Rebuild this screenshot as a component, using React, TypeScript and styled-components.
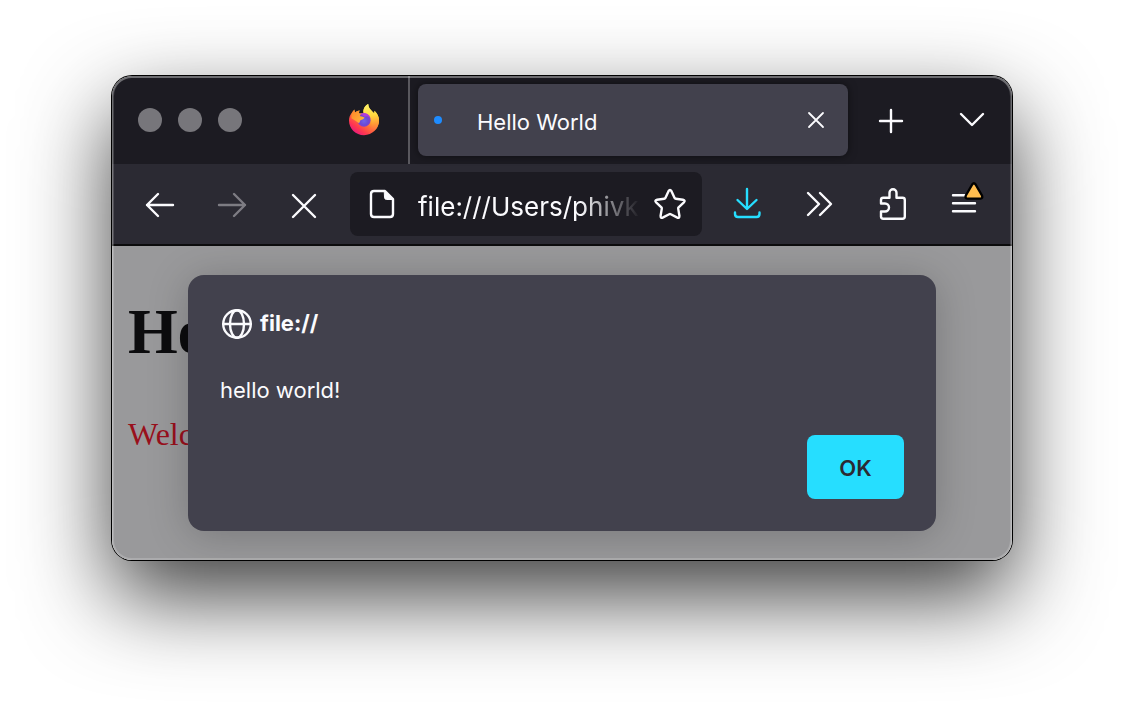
import React, { useState } from "react";
import styled, { createGlobalStyle } from "styled-components";

const ui = `Inter, "Liberation Sans", sans-serif`;

const GlobalStyle = createGlobalStyle`
  *, *::before, *::after { box-sizing: border-box; }
  body { margin: 0; background: #fff; }
`;

const Desktop = styled.div`
  min-height: 100vh;
  padding: 76px 112px;
  overflow: hidden;
  font-family: ${ui};
`;

const BrowserWindow = styled.main`
  position: relative;
  border-radius: 20px;
  box-shadow: 0 0 0 1px #000, 0 36px 88px rgba(0, 0, 0, 0.76);

  &::after {
    content: "";
    position: absolute;
    inset: 0;
    border-radius: inherit;
    box-shadow: inset 0 0 0 2px rgba(255, 255, 255, 0.18), inset 0 1px 0 1px rgba(255, 255, 255, 0.22);
    pointer-events: none;
  }
`;

const TabStrip = styled.header`
  display: flex;
  align-items: center;
  height: 88px;
  padding: 0 8px 0 26px;
  border-radius: 20px 20px 0 0;
  background: #1c1b22;
`;

const WindowControls = styled.div`
  display: flex;
  gap: 16px;
`;

const WindowDot = styled.button`
  width: 24px;
  height: 24px;
  padding: 0;
  border: 0;
  border-radius: 50%;
  background: #77767b;
`;

const IconButton = styled.button<{ $size?: number; $color?: string }>`
  display: flex;
  flex: none;
  align-items: center;
  justify-content: center;
  width: ${(p) => p.$size ?? 64}px;
  height: ${(p) => p.$size ?? 64}px;
  padding: 0;
  border: 0;
  border-radius: 8px;
  background: none;
  color: ${(p) => p.$color ?? "#fbfbfe"};

  &:disabled { color: #7d7c83; }
`;

const PinnedTab = styled.div`
  display: flex;
  align-self: stretch;
  align-items: center;
  width: 78px;
  margin-left: 90px;
  padding: 0 16px;
  border-right: 2px solid #5a595f;
`;

const Tab = styled.div`
  display: flex;
  flex: 1;
  align-items: center;
  min-width: 0;
  height: 72px;
  margin: 0 11px 0 8px;
  padding: 0 16px;
  border-radius: 8px;
  background: #42414d;
  box-shadow: 0 0 8px rgba(0, 0, 0, 0.5);
`;

const LoadingDot = styled.span`
  flex: none;
  width: 8px;
  height: 8px;
  margin-right: 35px;
  border-radius: 50%;
  background: #1e8cff;
`;

const TabTitle = styled.span`
  flex: 1;
  padding-top: 4px;
  overflow: hidden;
  color: #fbfbfe;
  font-size: 22px;
  line-height: 28px;
  white-space: nowrap;
`;

const TabListSlot = styled.div`
  margin-left: 17px;
`;

const NavBar = styled.nav`
  display: flex;
  align-items: center;
  gap: 8px;
  height: 82px;
  padding: 0 16px;
  border-bottom: 2px solid #0c0c0d;
  background: #2b2a33;
`;

const AddressBar = styled.label`
  display: flex;
  flex: 1;
  align-items: center;
  min-width: 0;
  height: 64px;
  margin: 0 6px;
  padding: 0 16px;
  border-radius: 8px;
  background: #1c1b22;
  color: #fbfbfe;
`;

const AddressInput = styled.input`
  flex: 1;
  min-width: 0;
  height: 40px;
  margin: 0 14px 0 20px;
  padding: 4px 0 0;
  border: 0;
  outline: 0;
  background: none;
  color: #fbfbfe;
  font-family: ${ui};
  font-size: 26px;
  line-height: 36px;
  mask-image: linear-gradient(to left, transparent 0, #000 60px);
`;

const Viewport = styled.section`
  display: grid;
  overflow: hidden;
  border-radius: 0 0 20px 20px;
  background: #99999b;
`;

const Page = styled.article`
  grid-area: 1 / 1;
  padding: 50px 16px 0;
  font-family: "Liberation Serif", serif;
`;

const PageHeading = styled.h1`
  margin: 0 0 48px;
  color: #0c0c0e;
  font-size: 64px;
  line-height: 72px;
`;

const PageText = styled.p`
  margin: 0;
  color: #99101c;
  font-size: 32px;
  line-height: 36px;
`;

const Dialog = styled.div`
  position: relative;
  grid-area: 1 / 1;
  display: flex;
  flex-direction: column;
  margin: 29px 76px;
  padding: 32px;
  border-radius: 16px;
  background: #42414d;
  box-shadow: 0 4px 40px rgba(0, 0, 0, 0.22);
  color: #fbfbfe;
  font-size: 22px;
  line-height: 28px;
`;

const DialogHeader = styled.h2`
  display: flex;
  align-items: center;
  gap: 8px;
  height: 32px;
  margin: 0 0 37px;
  font-size: 22px;
  font-weight: 700;
`;

const DialogMessage = styled.p`
  margin: 0 0 31px;
`;

const OkButton = styled.button`
  align-self: flex-end;
  min-width: 97px;
  height: 64px;
  padding: 2px 32px 0;
  border: 0;
  border-radius: 8px;
  background: #26deff;
  color: #2b2a33;
  font-family: ${ui};
  font-size: 22px;
  font-weight: 600;
`;

const Glyph = styled.svg`
  flex: none;
  display: block;
  width: 32px;
  height: 32px;
  overflow: visible;
  fill: none;
  stroke: currentColor;
  stroke-width: 2.4;
  stroke-linecap: round;
  stroke-linejoin: round;
`;

function Icon({ children }: { children: React.ReactNode }) {
  return (
    <Glyph viewBox="0 0 32 32" aria-hidden="true">
      {children}
    </Glyph>
  );
}

function FirefoxLogo() {
  return (
    <svg width="32" height="34" viewBox="0 0 32 34" role="img" aria-label="Firefox">
      <defs>
        <linearGradient id="flame" x1="26" y1="5" x2="6" y2="31" gradientUnits="userSpaceOnUse">
          <stop offset="0.05" stopColor="#fff44f" />
          <stop offset="0.35" stopColor="#ffb02e" />
          <stop offset="0.55" stopColor="#ff7139" />
          <stop offset="0.78" stopColor="#ff3750" />
          <stop offset="1" stopColor="#e31587" />
        </linearGradient>
        <linearGradient id="tail" x1="20" y1="1" x2="24" y2="30" gradientUnits="userSpaceOnUse">
          <stop offset="0" stopColor="#fff36b" />
          <stop offset="0.4" stopColor="#ffd83f" />
          <stop offset="0.7" stopColor="#ff9a35" />
          <stop offset="1" stopColor="#ff4055" stopOpacity="0" />
        </linearGradient>
        <radialGradient id="globe" cx="16" cy="18" r="8" gradientUnits="userSpaceOnUse">
          <stop offset="0" stopColor="#6f63ea" />
          <stop offset="0.5" stopColor="#6a4bd6" />
          <stop offset="1" stopColor="#9a35c0" />
        </radialGradient>
        <linearGradient id="head" x1="4" y1="9" x2="15" y2="18" gradientUnits="userSpaceOnUse">
          <stop offset="0" stopColor="#ff8a2a" />
          <stop offset="1" stopColor="#ffb43a" />
        </linearGradient>
      </defs>
      <path
        fill="url(#flame)"
        d="M3.6 10.2C4.2 8.7 5.2 7.2 6.6 6.4 6.6 7.6 6.9 8.7 7.4 9.5 8.9 8.1 10.3 7.6 11.7 7.5 11 8.5 10.9 9.5 11.2 10.3H15.500C14.8 6.8 16.5 3.1 20.2 1.1 20.3 4.6 22.1 6.4 24.3 8.5L26.3 10.6 26.5 7.8C29.4 10.6 31 13.9 31 17.6 31 25.7 24.3 32.2 16 32.2S1 25.8 1 17.5C1 14.7 1.9 12 3.6 10.2Z"
      />
      <path
        fill="url(#tail)"
        d="M20.2 1.1C20.3 4.6 22.1 6.4 24.3 8.5L26.3 10.6 26.5 7.8C29.4 10.6 31 13.9 31 17.6 31 24 27 29.5 21 31.3 24.8 26.5 25.4 20.5 23 15.5 21.3 12.2 16.6 11.2 15.5 9.6 15 6.1 17 2.8 20.2 1.1Z"
      />
      <circle cx="16" cy="17.2" r="6.600" fill="url(#globe)" />
      <path fill="#b23bdc" d="M12.5 10.8C16 8.8 21.3 10.3 22.3 15 20.5 12.8 18 12.8 16.5 13.8Z" />
      <path
        fill="url(#head)"
        d="M3.6 10.2C5 9.3 6.3 9.2 7.4 9.5 8.9 8.1 10.3 7.6 11.7 7.5 11 8.5 10.9 9.5 11.2 10.3L12.2 13.2C14.1 13.5 15.8 14 16.4 14.4 16.5 16 13.7 16.3 12.7 17.1 11.8 17.9 12 19.1 11 20.2 8.8 18.8 6.2 16.5 3.4 15.2Z"
      />
    </svg>
  );
}

export default function App() {
  const [address, setAddress] = useState("file:///Users/phivk/");
  return (
    <>
      <GlobalStyle />
      <Desktop>
        <BrowserWindow>
          <TabStrip>
            <WindowControls>
              <WindowDot aria-label="Close window" />
              <WindowDot aria-label="Minimize window" />
              <WindowDot aria-label="Zoom window" />
            </WindowControls>
            <PinnedTab>
              <FirefoxLogo />
            </PinnedTab>
            <Tab>
              <LoadingDot />
              <TabTitle>Hello World</TabTitle>
              <IconButton $size={32} aria-label="Close tab">
                <Icon>
                  <path strokeWidth="1.8" d="M9 9L23 23M23 9L9 23" />
                </Icon>
              </IconButton>
            </Tab>
            <IconButton aria-label="New tab">
              <Icon>
                <path d="M16 6V28M5 17H27" />
              </Icon>
            </IconButton>
            <TabListSlot>
              <IconButton aria-label="List all tabs">
                <Icon>
                  <path d="M5 10L16 21L27 10" />
                </Icon>
              </IconButton>
            </TabListSlot>
          </TabStrip>

          <NavBar>
            <IconButton aria-label="Back">
              <Icon>
                <path d="M3 17H29M14 6L3 17L14 28" />
              </Icon>
            </IconButton>
            <IconButton aria-label="Forward" disabled>
              <Icon>
                <path d="M3 17H29M18 6L29 17L18 28" />
              </Icon>
            </IconButton>
            <IconButton aria-label="Stop">
              <Icon>
                <path d="M5 7L27 29M27 7L5 29" />
              </Icon>
            </IconButton>
            <AddressBar>
              <Icon>
                <path d="M8 3H19L27 11V26Q27 29 24 29H8Q5 29 5 26V6Q5 3 8 3Z" />
                <path fill="currentColor" strokeWidth="1" d="M18.5 2.5L27.5 11.5H20.500Q18.5 11.5 18.5 9.5Z" />
              </Icon>
              <AddressInput
                aria-label="Address"
                spellCheck={false}
                value={address}
                onChange={(e) => setAddress(e.target.value)}
              />
              <IconButton $size={32} aria-label="Bookmark this page">
                <Icon>
                  <path d="M14.5 3.2Q16 .8 17.5 3.2L20.6 9.9Q21 10.6 21.8 10.7L28.9 11.7Q31.7 12.3 29.9 14.3L24.6 19.3Q24.1 19.9 24.2 20.6L25.4 27.8Q25.6 30.7 22.9 29.4L16.8 26.2Q16 25.8 15.2 26.2L9.1 29.4Q6.4 30.7 6.6 27.8L7.8 20.6Q7.9 19.9 7.4 19.3L2.1 14.3Q.3 12.3 3.1 11.7L10.2 10.7Q11 10.6 11.4 9.9Z" />
                </Icon>
              </IconButton>
            </AddressBar>
            <IconButton $color="#26deff" aria-label="Downloads">
              <Icon>
                <path d="M15 1V20.500M5.5 12L15 21L24.5 12M3 24.5V26Q3 29 6 29H24.500Q27.5 29 27.5 26V24.500" />
              </Icon>
            </IconButton>
            <IconButton aria-label="More tools">
              <Icon>
                <path d="M4 5L15 16L4 27M16 5L27 16L16 27" />
              </Icon>
            </IconButton>
            <IconButton aria-label="Extensions">
              <Icon>
                <path d="M5 15.5V12Q5 9.8 7.2 9.8H13.500V4.800A3.5 3.5 0 0 1 20.5 4.8V9.800H26.500Q28.8 9.8 28.8 12V28.500Q28.8 30.7 26.5 30.7H7.200Q5 30.7 5 28.5V23.500H9A4 4 0 0 0 9 15.5Z" />
              </Icon>
            </IconButton>
            <IconButton aria-label="Open application menu">
              <Icon>
                <path d="M5 7.3H27M5 15.3H27M5 23.3H27" />
                <path
                  fill="#ffbd4f"
                  stroke="#000"
                  strokeWidth="2.4"
                  d="M24.2 -3.5Q25.9 -6 27.6 -3.5L34 7.5Q35 10.6 32.5 10.6H19.300Q16.8 10.6 17.8 7.5Z"
                />
              </Icon>
            </IconButton>
          </NavBar>

          <Viewport>
            <Page>
              <PageHeading>He</PageHeading>
              <PageText>Welc</PageText>
            </Page>
            <Dialog role="alertdialog" aria-labelledby="dialog-origin" aria-describedby="dialog-message">
              <DialogHeader id="dialog-origin">
                <Icon>
                  <circle cx="17" cy="17" r="13.8" />
                  <ellipse cx="17" cy="17" rx="7" ry="13.8" />
                  <path d="M3.2 17H30.8" />
                </Icon>
                file://
              </DialogHeader>
              <DialogMessage id="dialog-message">hello world!</DialogMessage>
              <OkButton>OK</OkButton>
            </Dialog>
          </Viewport>
        </BrowserWindow>
      </Desktop>
    </>
  );
}
